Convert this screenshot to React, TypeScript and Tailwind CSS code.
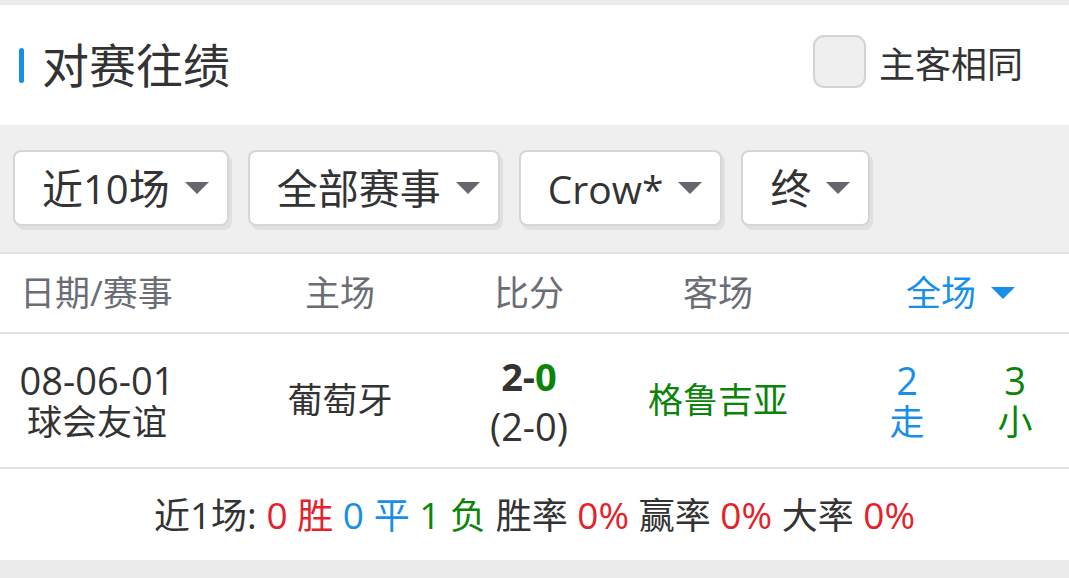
import React from "react";

function Tri({ color = "#66666e" }: { color?: string }) {
  return (
    <svg width="24" height="12" viewBox="0 0 24 12" className="shrink-0">
      <polygon points="0,0 24,0 12,12" fill={color} />
    </svg>
  );
}

function Btn({ children }: { children: React.ReactNode }) {
  return (
    <div className="flex h-[76px] items-center gap-[15px] rounded-[8px] border-2 border-[#d6d6d6] bg-white pl-[27px] pr-[18px] shadow-[3px_4px_0_#e0e0e0]">
      <span className="text-[41px] leading-none text-[#333]">{children}</span>
      <Tri />
    </div>
  );
}

const L = "text-[38px]";
const LS = "text-[37px]";

export default function App() {
  const red = "text-[#e4222b]";
  const blue = "text-[#1a8fe8]";
  const green = "text-[#0a850a]";
  return (
    <div className="h-[578px] w-[1069px] overflow-hidden bg-[#ebebeb] font-['Open_Sans','Noto_Sans_CJK_SC',sans-serif]">
      <div className="h-[5px] bg-[#ebebeb]" />
      <div className="flex h-[120px] items-center justify-between bg-white pl-[19px] pr-[46px]">
        <div className="flex items-center">
          <div className="h-[35px] w-[5px] rounded-full bg-[#1a8fe8]" />
          <span className="ml-[18px] text-[47px] leading-none text-[#333]">对赛往绩</span>
        </div>
        <div className="flex items-center">
          <div className="mb-[7px] h-[53px] w-[53px] rounded-[11px] border-2 border-[#d3d3d3] bg-[#efefef]" />
          <span className="ml-[13px] text-[36px] leading-none text-[#333]">主客相同</span>
        </div>
      </div>
      <div className="flex h-[127px] items-start gap-[19px] bg-[#efefef] pl-[13px] pt-[25px]">
        <Btn>
          近<span className="text-[40px]">10</span>场
        </Btn>
        <Btn>全部赛事</Btn>
        <Btn>
          <span className="text-[39px]">Crow*</span>
        </Btn>
        <Btn>终</Btn>
      </div>
      <div className="h-[2px] bg-[#e3e3e3]" />
      <div className="grid h-[78px] grid-cols-[194px_292px_86px_292px_86px_1fr] items-center bg-white text-[35px] text-[#6a6d75]">
        <div className="pl-[20px]">日期/赛事</div>
        <div className="text-center">主场</div>
        <div className="text-center">比分</div>
        <div className="text-center">客场</div>
        <div className={`col-span-2 flex items-center justify-center gap-[15px] pr-[12px] ${blue}`}>
          <span>全场</span>
          <Tri color="#1a8fe8" />
        </div>
      </div>
      <div className="h-[2px] bg-[#e3e3e3]" />
      <div className="grid h-[133px] grid-cols-[194px_292px_86px_292px_86px_1fr] items-center bg-white text-[35px] text-[#333]">
        <div className="flex flex-col items-center leading-[42px]">
          <span className={`${L} leading-[42px]`}>08-06-01</span>
          <span className="leading-[42px]">球会友谊</span>
        </div>
        <div className="text-center">葡萄牙</div>
        <div className={`flex flex-col items-center leading-[50px] ${L}`}>
          <span className="font-bold">
            2-<span className={green}>0</span>
          </span>
          <span>(2-0)</span>
        </div>
        <div className={`text-center ${green}`}>格鲁吉亚</div>
        <div className={`flex flex-col items-center leading-[42px] ${blue}`}>
          <span className={`${L} leading-[42px]`}>2</span>
          <span className="leading-[42px]">走</span>
        </div>
        <div className={`flex flex-col items-center pl-[11px] leading-[42px] ${green}`}>
          <span className={`${L} leading-[42px]`}>3</span>
          <span className="leading-[42px]">小</span>
        </div>
      </div>
      <div className="h-[2px] bg-[#e3e3e3]" />
      <div className="flex h-[91px] items-center justify-center whitespace-pre bg-white text-[36px] text-[#333]">
        <span>
          近<span className={LS}>1</span>场<span className={LS}>: </span>
        </span>
        <span className={red}>
          <span className={LS}>0 </span>胜<span className={LS}> </span>
        </span>
        <span className={blue}>
          <span className={LS}>0 </span>平<span className={LS}> </span>
        </span>
        <span className={green}>
          <span className={LS}>1 </span>负<span className={LS}> </span>
        </span>
        <span>
          胜率<span className={LS}> </span>
        </span>
        <span className={red}>
          <span className={LS}>0% </span>
        </span>
        <span>
          赢率<span className={LS}> </span>
        </span>
        <span className={red}>
          <span className={LS}>0% </span>
        </span>
        <span>
          大率<span className={LS}> </span>
        </span>
        <span className={red}>
          <span className={LS}>0%</span>
        </span>
      </div>
    </div>
  );
}
